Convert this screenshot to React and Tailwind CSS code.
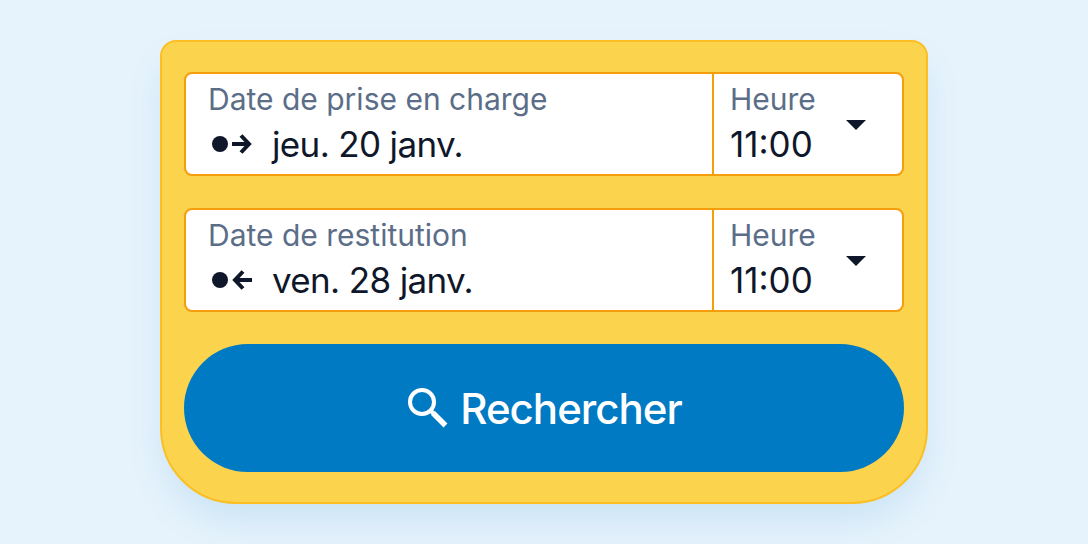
function PickupIcon() {
  return (
    <svg width="44" height="24" viewBox="0 0 44 24" fill="none">
      <circle cx="10" cy="12" r="8" fill="#0f172a" />
      <path d="M22 12H39" stroke="#0f172a" strokeWidth="4" />
      <path d="M31 3.5L39 12L31 20.5" stroke="#0f172a" strokeWidth="4" />
    </svg>
  );
}

function ReturnIcon() {
  return (
    <svg width="44" height="24" viewBox="0 0 44 24" fill="none">
      <circle cx="10" cy="12" r="8" fill="#0f172a" />
      <path d="M25 12H42" stroke="#0f172a" strokeWidth="4" />
      <path d="M33 3.5L25 12L33 20.5" stroke="#0f172a" strokeWidth="4" />
    </svg>
  );
}

function SearchIcon() {
  return (
    <svg width="42" height="42" viewBox="0 0 42 42" fill="none" stroke="white">
      <circle cx="15" cy="15" r="12" strokeWidth="4" />
      <path d="M23 23L27 27" strokeWidth="4" />
      <path d="M26 26L38.5 38.5" strokeWidth="5.5" />
    </svg>
  );
}

function Field({ label, date, time, icon }) {
  return (
    <div className="flex h-[104px] rounded-lg border-2 border-[#f59e0b] bg-white">
      {/* Date */}
      <div className="w-[528px] border-r-2 border-[#f59e0b] pl-[22px] pt-[3px]">
        <div className="h-[45px] text-[30px] leading-[44px] text-[#5b6d87]">
          {label}
        </div>
        <div className="flex h-11 items-center text-[35px] leading-[44px] tracking-[-0.65px] text-[#0f172a]">
          <span className="mr-[18px] pl-0.5">{icon}</span>
          {date}
        </div>
      </div>

      {/* Time */}
      <div className="flex flex-1 items-center justify-between pl-4 pr-9">
        <div className="h-full pt-[3px]">
          <div className="h-[45px] text-[30px] leading-[44px] text-[#5b6d87]">
            Heure
          </div>
          <div className="h-11 text-[35px] leading-[44px] text-[#0f172a]">
            {time}
          </div>
        </div>
        <svg className="mt-0.5" width="20" height="10" viewBox="0 0 20 10">
          <path d="M0 0H20L10 10Z" fill="#0f172a" />
        </svg>
      </div>
    </div>
  );
}

function App() {
  return (
    <div className="flex h-[544px] justify-center overflow-hidden bg-[#e6f3fc] pt-10 font-['Inter',sans-serif]">
      <div className="flex h-[464px] w-[768px] flex-col gap-8 rounded-t-[16px] rounded-b-[76px] border-2 border-[#fbbf24] bg-[#fcd34d] px-[22px] pt-[30px] shadow-[0_20px_40px_-8px_rgba(0,122,195,0.15)]">
        <Field
          label="Date de prise en charge"
          date="jeu. 20 janv."
          time="11:00"
          icon={<PickupIcon />}
        />
        <Field
          label="Date de restitution"
          date="ven. 28 janv."
          time="11:00"
          icon={<ReturnIcon />}
        />

        <button className="flex h-32 items-center justify-center rounded-full bg-[#007ac3] text-[42px] font-medium tracking-[-1px] text-white">
          <span className="mr-[11px] pl-px">
            <SearchIcon />
          </span>
          Rechercher
        </button>
      </div>
    </div>
  );
}

export default App;
